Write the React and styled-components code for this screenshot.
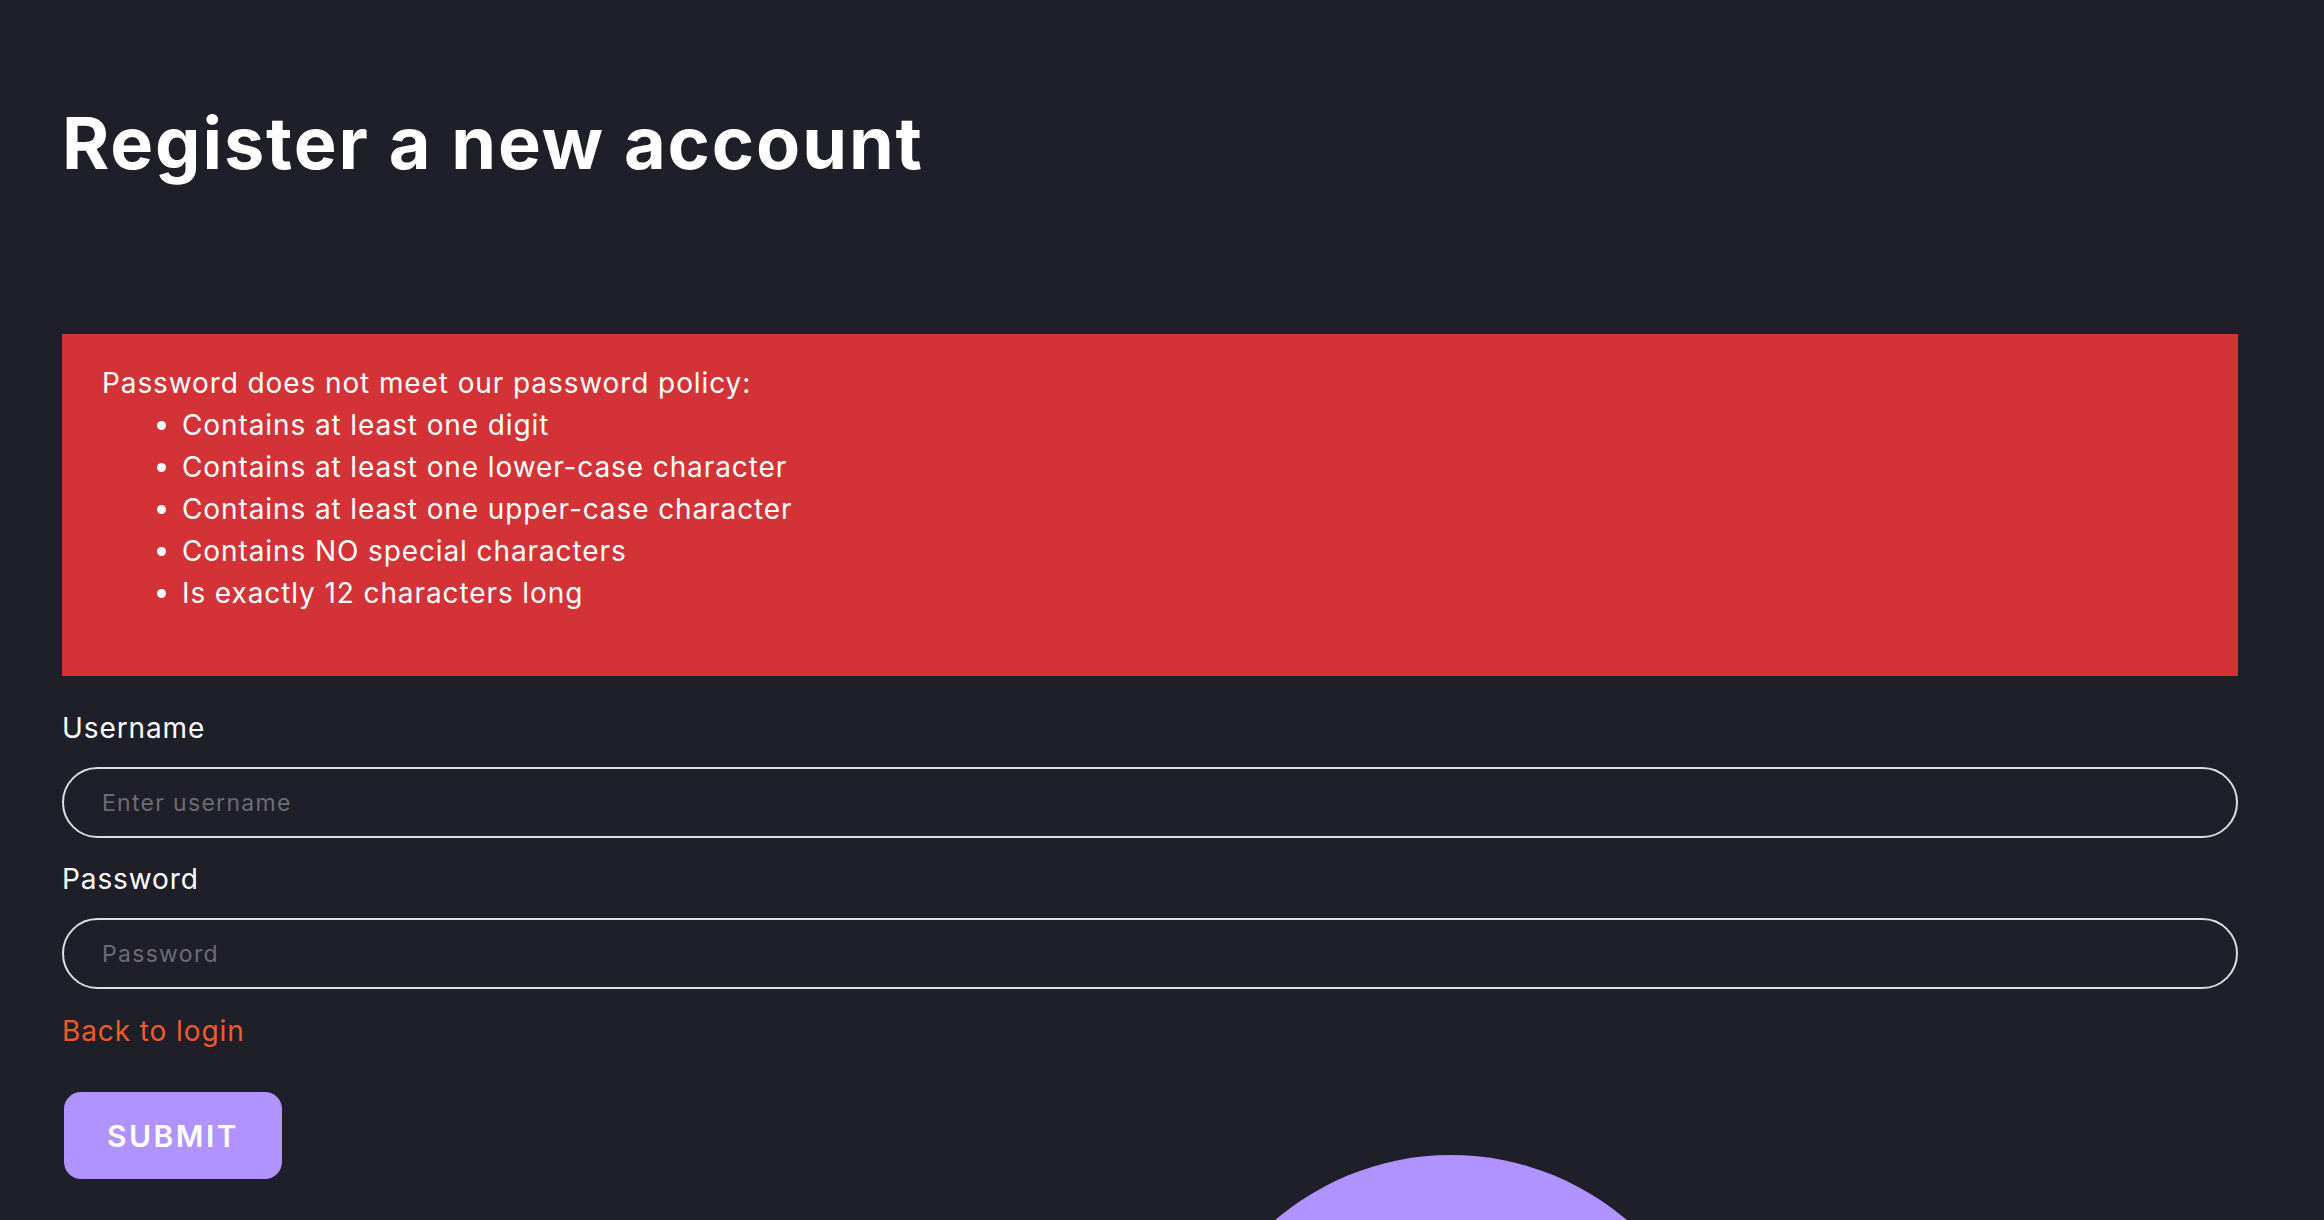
import React from "react";
import styled, { createGlobalStyle } from "styled-components";

const Global = createGlobalStyle`
  html, body {
    margin: 0;
    padding: 0;
    background: #1f1f29;
    overflow: hidden;
  }
  * { box-sizing: border-box; }
`;

const Page = styled.div`
  position: relative;
  min-height: 100vh;
  overflow: hidden;
  background: #1f1f29;
  color: #ffffff;
  font-family: Inter, "Open Sans", sans-serif;
  padding: 98px 86px 0 62px;
`;

const Title = styled.h1`
  margin: 0 0 146px 0;
  font-family: Inter, sans-serif;
  font-weight: 700;
  font-size: 72px;
  line-height: 90px;
  letter-spacing: 1.9px;
  color: #ffffff;
`;

const Alert = styled.div`
  background: #d33336;
  padding: 28px 40px 34px 40px;
  font-size: 28px;
  line-height: 42px;
  letter-spacing: 0.9px;
  color: #ffffff;
`;

const AlertTitle = styled.div``;

const RuleList = styled.ul`
  margin: 0 0 28px 0;
  padding-left: 80px;
`;

const Rule = styled.li``;

const Form = styled.form`
  display: flex;
  flex-direction: column;
  padding-top: 31px;
`;

const Label = styled.label`
  font-size: 28px;
  line-height: 42px;
  letter-spacing: 0.9px;
  color: #ffffff;
  margin-bottom: 18px;
`;

const Input = styled.input`
  height: 71px;
  width: 100%;
  border: 2px solid #dedede;
  border-radius: 36px;
  background: transparent;
  padding: 0 38px;
  font-family: Inter, sans-serif;
  font-size: 23px;
  letter-spacing: 1.3px;
  color: #ffffff;
  outline: none;
  margin-bottom: 20px;

  &::placeholder {
    color: #6c6c74;
  }
`;

const BackLink = styled.a`
  align-self: flex-start;
  font-size: 28px;
  line-height: 42px;
  letter-spacing: 0.9px;
  color: #f15a29;
  text-decoration: none;
  margin-top: 1px;
`;

const SubmitButton = styled.button`
  align-self: flex-start;
  margin-top: 40px;
  margin-left: 2px;
  width: 218px;
  height: 87px;
  border: none;
  border-radius: 17px;
  background: #b093fe;
  color: #ffffff;
  font-family: Inter, sans-serif;
  font-weight: 600;
  font-size: 30px;
  letter-spacing: 2.5px;
  cursor: pointer;
`;

const Blob = styled.div`
  position: absolute;
  left: 1181px;
  top: 1155px;
  width: 540px;
  height: 540px;
  border-radius: 50%;
  background: #b093fe;
  pointer-events: none;
`;

const rules = [
  "Contains at least one digit",
  "Contains at least one lower-case character",
  "Contains at least one upper-case character",
  "Contains NO special characters",
  "Is exactly 12 characters long",
];

export default function App() {
  return (
    <>
      <Global />
      <Page>
        <Title>Register a new account</Title>
        <Alert>
          <AlertTitle>Password does not meet our password policy:</AlertTitle>
          <RuleList>
            {rules.map((r) => (
              <Rule key={r}>{r}</Rule>
            ))}
          </RuleList>
        </Alert>
        <Form onSubmit={(e) => e.preventDefault()}>
          <Label htmlFor="username">Username</Label>
          <Input id="username" type="text" placeholder="Enter username" />
          <Label htmlFor="password">Password</Label>
          <Input id="password" type="password" placeholder="Password" />
          <BackLink href="#">Back to login</BackLink>
          <SubmitButton type="submit">SUBMIT</SubmitButton>
        </Form>
        <Blob />
      </Page>
    </>
  );
}
